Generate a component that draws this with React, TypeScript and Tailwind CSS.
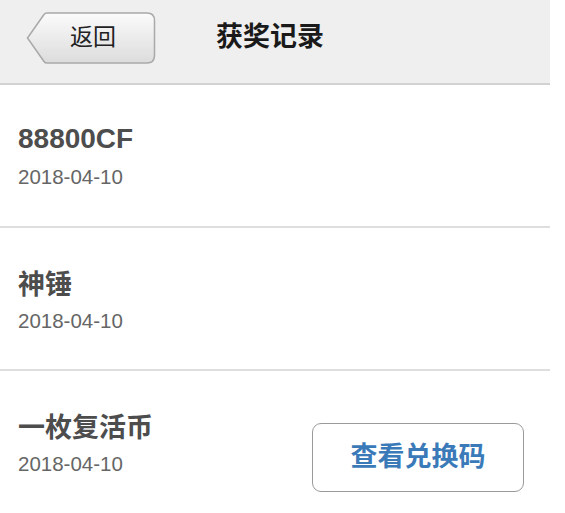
import React from "react";

const font = { fontFamily: '"Liberation Sans", "Noto Sans CJK SC", sans-serif' };

function BackButton() {
  return (
    <div className="relative w-[130px] h-[52px]">
      <svg className="absolute inset-0" width="130" height="52" viewBox="0 0 130 52">
        <defs>
          <linearGradient id="bg" x1="0" y1="0" x2="0" y2="1">
            <stop offset="0" stopColor="#fbfbfb" />
            <stop offset="1" stopColor="#dcdcdc" />
          </linearGradient>
        </defs>
        <path
          d="M1.5 26 L18 2.5 Q19 1 21 1 L121 1 Q128.5 1 128.5 8.5 L128.5 43.5 Q128.5 51 121 51 L21 51 Q19 51 18 49.5 Z"
          fill="url(#bg)"
          stroke="#a9a9a9"
          strokeWidth="1.5"
        />
      </svg>
      <div className="relative flex h-full items-center justify-center pl-[4px] text-[23px] text-[#222]">
        返回
      </div>
    </div>
  );
}

function Row({ title, date, cjk = false }: { title: string; date: string; cjk?: boolean }) {
  return (
    <div className="flex h-[143px] items-start justify-between border-b-2 border-[#dedede] pl-[18px] pr-[26px]">
      <div className={cjk ? "pt-[41px]" : "pt-[38px]"}>
        <div className={`leading-[32px] text-[#4d4d4d] ${cjk ? "text-[27px] font-semibold" : "text-[28px] font-bold"}`}>{title}</div>
        <div className={`${cjk ? "mt-[8px]" : "mt-[10px]"} text-[20.5px] leading-[24px] text-[#666]`}>{date}</div>
      </div>
    </div>
  );
}

export default function App() {
  return (
    <div className="w-[565px] h-[513px] bg-white overflow-hidden" style={font}>
      <div className="w-[550px]">
        <div className="flex h-[85px] items-center border-b-2 border-[#d2d2d2] bg-[#efefef] pl-[26px] pb-[8px]">
          <BackButton />
          <div className="ml-[60px] text-[27px] font-bold text-[#1a1a1a]">获奖记录</div>
        </div>
        <Row title="88800CF" date="2018-04-10" />
        <Row title="神锤" date="2018-04-10" cjk />
        <div className="flex h-[137px] items-start justify-between pl-[18px] pr-[26px]">
          <div className="pt-[41px]">
            <div className="text-[27px] leading-[32px] font-semibold text-[#4d4d4d]">一枚复活币</div>
            <div className="mt-[8px] text-[20.5px] leading-[24px] text-[#666]">2018-04-10</div>
          </div>
          <button className="mt-[52px] flex h-[69px] w-[212px] items-center justify-center rounded-[9px] border-[1.5px] border-[#9a9a9a] bg-white text-[27px] font-semibold text-[#3b7ab8]">
            查看兑换码
          </button>
        </div>
      </div>
    </div>
  );
}
